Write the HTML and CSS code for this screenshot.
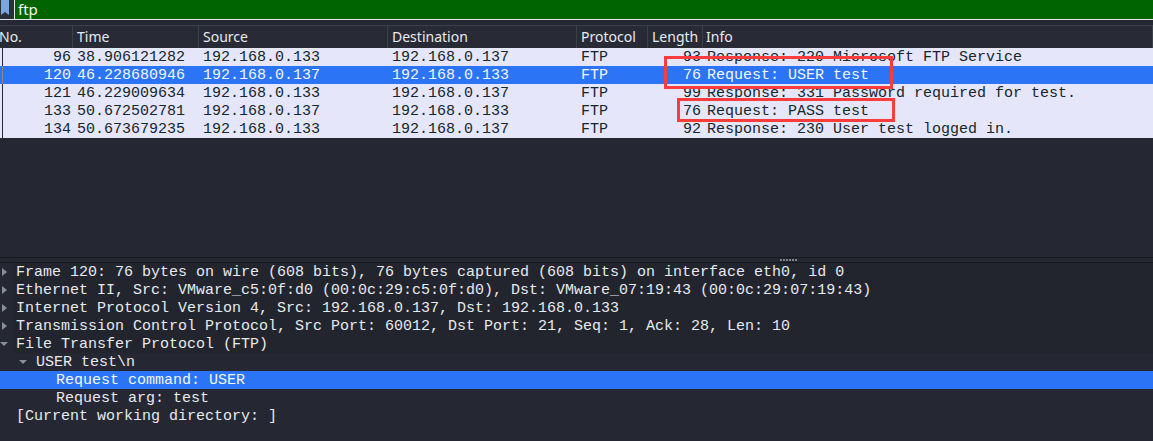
FILE: index.html
```html
<!DOCTYPE html>
<html lang="en">
<head>
    <meta charset="UTF-8">
    <title>ftp</title>
    <link rel="stylesheet" href="styles.css">
</head>
<body>
    <div class="filter-bar">
        <div class="bookmark">
            <svg width="8" height="15" viewBox="0 0 8 15"><path d="M0 0H8V15L4 12L0 15Z" fill="#7ba6dc"/></svg>
        </div>
        <div class="filter-input">ftp</div>
    </div>

    <div class="packet-list">
        <div class="list-head">
            <div class="col-no">No.</div>
            <div class="col-time">Time</div>
            <div class="col-addr">Source</div>
            <div class="col-addr">Destination</div>
            <div class="col-proto">Protocol</div>
            <div class="col-len">Length</div>
            <div class="col-info">Info</div>
        </div>
        <div class="list-body">
            <div class="row">
                <div class="col-no">96</div><div class="col-time">38.906121282</div><div class="col-addr">192.168.0.133</div><div class="col-addr">192.168.0.137</div><div class="col-proto">FTP</div><div class="col-len">93</div><div class="col-info">Response: 220 Microsoft FTP Service</div>
            </div>
            <div class="row selected">
                <div class="col-no">120</div><div class="col-time">46.228680946</div><div class="col-addr">192.168.0.137</div><div class="col-addr">192.168.0.133</div><div class="col-proto">FTP</div><div class="col-len">76</div><div class="col-info">Request: USER test</div>
            </div>
            <div class="row">
                <div class="col-no">121</div><div class="col-time">46.229009634</div><div class="col-addr">192.168.0.133</div><div class="col-addr">192.168.0.137</div><div class="col-proto">FTP</div><div class="col-len">99</div><div class="col-info">Response: 331 Password required for test.</div>
            </div>
            <div class="row">
                <div class="col-no">133</div><div class="col-time">50.672502781</div><div class="col-addr">192.168.0.137</div><div class="col-addr">192.168.0.133</div><div class="col-proto">FTP</div><div class="col-len">76</div><div class="col-info">Request: PASS test</div>
            </div>
            <div class="row">
                <div class="col-no">134</div><div class="col-time">50.673679235</div><div class="col-addr">192.168.0.133</div><div class="col-addr">192.168.0.137</div><div class="col-proto">FTP</div><div class="col-len">92</div><div class="col-info">Response: 230 User test logged in.</div>
            </div>
        </div>
        <div class="mark mark-user"></div>
        <div class="mark mark-pass"></div>
    </div>

    <div class="list-rest"></div>
    <div class="sash"><span class="grip"></span></div>

    <div class="details">
        <div class="tree-row top shaded"><span class="arrow right"></span>Frame 120: 76 bytes on wire (608 bits), 76 bytes captured (608 bits) on interface eth0, id 0</div>
        <div class="tree-row top shaded"><span class="arrow right"></span>Ethernet II, Src: VMware_c5:0f:d0 (00:0c:29:c5:0f:d0), Dst: VMware_07:19:43 (00:0c:29:07:19:43)</div>
        <div class="tree-row top shaded"><span class="arrow right"></span>Internet Protocol Version 4, Src: 192.168.0.137, Dst: 192.168.0.133</div>
        <div class="tree-row top shaded"><span class="arrow right"></span>Transmission Control Protocol, Src Port: 60012, Dst Port: 21, Seq: 1, Ack: 28, Len: 10</div>
        <div class="tree-row top shaded"><span class="arrow down"></span>File Transfer Protocol (FTP)</div>
        <div class="tree-row level-1"><span class="arrow down"></span>USER test\n</div>
        <div class="tree-row level-2 selected">Request command: USER</div>
        <div class="tree-row level-2">Request arg: test</div>
        <div class="tree-row top">[Current working directory: ]</div>
    </div>
</body>
</html>
```

FILE: styles.css
```css
html, body {
    height: 100%;
}

body {
    margin: 0;
    background-color: #252833;
    font-family: 'Liberation Mono', monospace;
    font-size: 15px;
    overflow: hidden;
}

.filter-bar {
    display: flex;
    height: 20px;
    background-color: #006400;
    border-bottom: 1px solid #dfe3e8;
    box-sizing: border-box;
}

.bookmark {
    width: 15px;
    padding-left: 1px;
    box-sizing: border-box;
    background-color: #2a2e39;
    border-right: 1px solid #dfe3e8;
}

.filter-input {
    padding-left: 3px;
    font-family: 'Noto Sans', sans-serif;
    font-size: 15px;
    line-height: 18px;
    color: #f2f4f6;
}

.packet-list {
    position: relative;
    margin-top: 5px;
    height: 114px;
    border-top: 1px solid #3c404b;
}

.list-head {
    display: flex;
    height: 22px;
    font-family: 'Noto Sans', sans-serif;
    font-size: 14px;
    line-height: 21px;
    color: #e8eaee;
    background-color: #282b35;
}

.list-head > div {
    border-right: 1px solid #3c404b;
    box-sizing: border-box;
    padding-left: 4px;
}

.list-head .col-no {
    padding-left: 0;
    text-indent: -1px;
    text-align: left;
}

.list-head .col-len {
    padding-left: 4px;
    padding-right: 0;
    text-align: left;
}

.list-head .col-info {
    padding-left: 3px;
}

.list-body {
    color: #12272e;
}

.row {
    display: flex;
    height: 18px;
    line-height: 20px;
    white-space: pre;
    padding-left: 3px;
    background-color: #e6e6fa;
    background-image: linear-gradient(to right, transparent 2px, #252833 2px, #252833 3px, transparent 3px);
}

.row > div {
    box-sizing: border-box;
    padding-left: 4px;
}

.row.selected {
    background-color: #2a74f5;
    background-image: linear-gradient(to right, transparent 2px, #8c8a80 2px, #8c8a80 3px, transparent 3px);
    color: #f4f7fd;
}

.col-no {
    width: 73px;
}

.row .col-no {
    width: 70px;
    padding-left: 0;
    padding-right: 2px;
    text-align: right;
}

.col-time {
    width: 126px;
}

.col-addr {
    width: 189px;
}

.col-proto {
    width: 71px;
}

.col-len {
    width: 55px;
}

.row .col-len {
    padding-left: 0;
    padding-right: 2px;
    text-align: right;
}

.col-info {
    flex: 1;
}

.mark {
    position: absolute;
    border: 3px solid #fa3c3c;
    box-sizing: border-box;
}

.mark-user {
    left: 664px;
    top: 30px;
    width: 229px;
    height: 33px;
}

.mark-pass {
    left: 677px;
    top: 72px;
    width: 218px;
    height: 24px;
}

.list-rest {
    height: 118px;
    border-bottom: 1px solid #16181f;
    box-sizing: border-box;
}

.sash {
    height: 5px;
    padding-left: 780px;
    padding-top: 1px;
    border-bottom: 1px solid #16181f;
    box-sizing: border-box;
}

.grip {
    display: block;
    width: 17px;
    height: 2px;
    background-image: linear-gradient(to right, #7d818a 2px, transparent 1px);
    background-size: 3px 2px;
}

.details {
    color: #e8eaee;
}

.tree-row {
    height: 18px;
    line-height: 20px;
    white-space: pre;
    position: relative;
}

.tree-row.top {
    padding-left: 16px;
}

.tree-row.shaded {
    background-image: linear-gradient(to right, transparent 13px, #22252e 13px);
}

.tree-row.level-1 {
    padding-left: 36px;
}

.tree-row.level-2 {
    padding-left: 56px;
}

.tree-row.selected {
    background-color: #2a74f5;
    color: #f4f7fd;
}

.arrow {
    position: absolute;
    width: 0;
    height: 0;
}

.arrow.right {
    left: 2px;
    top: 5px;
    border-left: 5px solid #8a8e97;
    border-top: 4px solid transparent;
    border-bottom: 4px solid transparent;
}

.arrow.down {
    left: 0;
    top: 7px;
    border-top: 4px solid #8a8e97;
    border-left: 4px solid transparent;
    border-right: 4px solid transparent;
}

.level-1 .arrow.down {
    left: 19px;
}
```
